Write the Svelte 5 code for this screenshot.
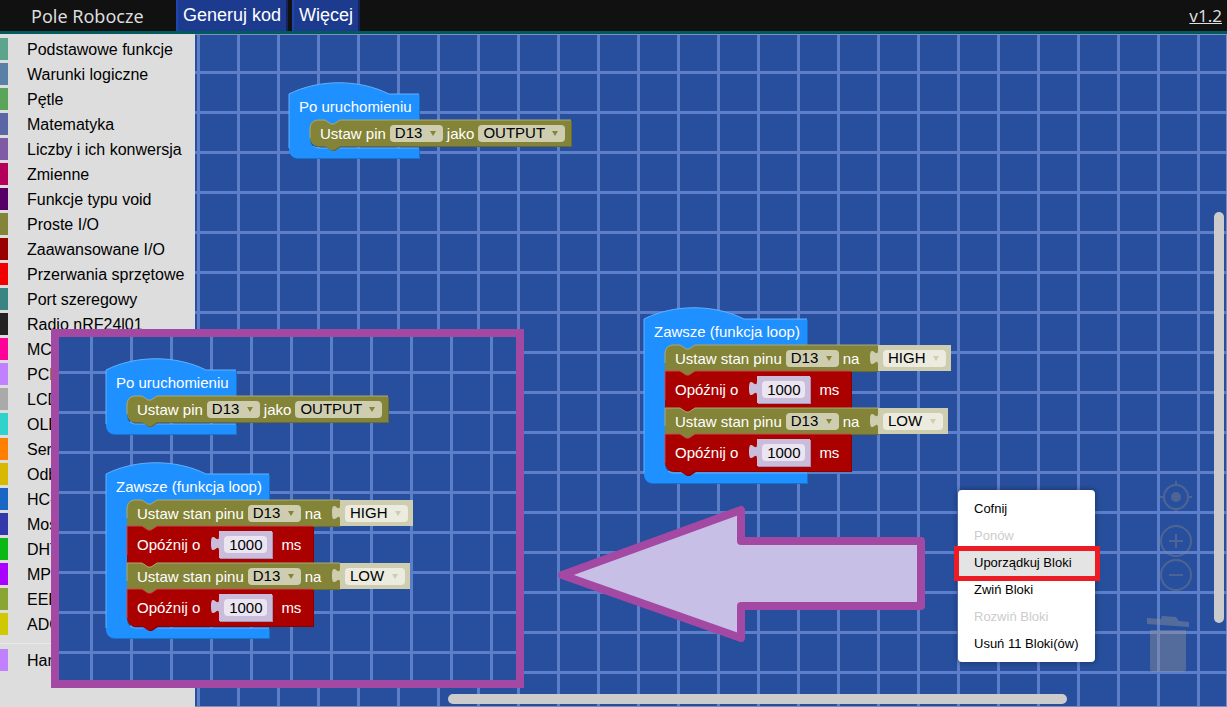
<script lang="ts">
  type Statement = {
    kind: 'mode' | 'write' | 'delay';
    value: string;
    valueWidth: number;
  };

  type Stack = {
    title: string;
    width: number;
    statements: Statement[];
  };

  const categories = [
    { name: 'Podstawowe funkcje', color: '#5ba58c' },
    { name: 'Warunki logiczne', color: '#5b80a5' },
    { name: 'Pętle', color: '#5ba55b' },
    { name: 'Matematyka', color: '#5b67a5' },
    { name: 'Liczby i ich konwersja', color: '#805ba5' },
    { name: 'Zmienne', color: '#b5005b' },
    { name: 'Funkcje typu void', color: '#550066' },
    { name: 'Proste I/O', color: '#848439' },
    { name: 'Zaawansowane I/O', color: '#990000' },
    { name: 'Przerwania sprzętowe', color: '#f00000' },
    { name: 'Port szeregowy', color: '#3b8484' },
    { name: 'Radio nRF24l01', color: '#222222' },
    { name: 'MCP', color: '#ff0099' },
    { name: 'PCF', color: '#c080ff' },
    { name: 'LCD', color: '#aaaaaa' },
    { name: 'OLED', color: '#30d2cc' },
    { name: 'Serwo', color: '#ff8000' },
    { name: 'Odbiornik', color: '#d6b900' },
    { name: 'HC-SR04', color: '#1a66c4' },
    { name: 'Most H', color: '#3338aa' },
    { name: 'DHT', color: '#0cb814' },
    { name: 'MPU', color: '#aa00ff' },
    { name: 'EEPROM', color: '#8aa632' },
    { name: 'ADC', color: '#d0c800' }
  ];

  const setup: Stack = {
    title: 'Po uruchomieniu',
    width: 130,
    statements: [{ kind: 'mode', value: 'OUTPUT', valueWidth: 87 }]
  };

  const loop: Stack = {
    title: 'Zawsze (funkcja loop)',
    width: 163,
    statements: [
      { kind: 'write', value: 'HIGH', valueWidth: 63 },
      { kind: 'delay', value: '1000', valueWidth: 43 },
      { kind: 'write', value: 'LOW', valueWidth: 60 },
      { kind: 'delay', value: '1000', valueWidth: 43 }
    ]
  };

  const workspaceStacks = [
    { stack: setup, x: 94, y: 59 },
    { stack: loop, x: 449, y: 284 }
  ];

  const previewStacks = [
    { stack: setup, x: 47, y: 33 },
    { stack: loop, x: 47, y: 137 }
  ];

  const menuItems = [
    { label: 'Cofnij', enabled: true },
    { label: 'Ponów', enabled: false },
    { label: 'Uporządkuj Bloki', enabled: true },
    { label: 'Zwiń Bloki', enabled: true },
    { label: 'Rozwiń Bloki', enabled: false },
    { label: 'Usuń 11 Bloki(ów)', enabled: true }
  ];

  const sizes = {
    mode: { width: 261, height: 26 },
    write: { width: 213, height: 26 },
    delay: { width: 186, height: 37 }
  };

  let highlighted = 2;

  function mouthHeight(stack: Stack) {
    return stack.statements.reduce((sum, s) => sum + sizes[s.kind].height, 2);
  }

  // C-shaped block with a rounded hat on top
  function hatPath(width: number, mouth: number) {
    return `M0,0 c30,-15 70,-15 100,0 H${width} v26 H51 l-6,4 h-3 l-6,-4 h-7 a8,8 0 0 0 -8,8 v${mouth - 16} a8,8 0 0 0 8,8 H${width} v10 H8 a8,8 0 0 1 -8,-8 z`;
  }

  function statementPath(width: number, height: number, first: boolean, last: boolean) {
    const start = first ? 'M0,8 a8,8 0 0 1 8,-8' : 'M0,0';
    const end = last ? 'H8 a8,8 0 0 1 -8,-8' : 'H0';
    return `${start} H15 l6,4 h3 l6,-4 H${width} v${height} H30 l-6,4 h-3 l-6,-4 ${end} z`;
  }

  function statementEdge(width: number, height: number, first: boolean) {
    const start = first ? `M0,${height - 8} V8 a8,8 0 0 1 8,-8` : `M0,${height - 8} V0`;
    return `${start} H15 l6,4 h3 l6,-4 H${width}`;
  }
</script>

{#snippet dropdown(value: string, width: number, label: string)}
  <span class="dropdown" style="width: {width}px">
    <select aria-label={label}>
      <option>{value}</option>
    </select>
  </span>
{/snippet}

{#snippet plug()}
  <svg class="plug" width="9" height="20" viewBox="0 0 9 20" aria-hidden="true">
    <path d="M9,5 H8 c0,10 -8,-8 -8,7.5 s8,-2.5 8,7.5 h1 z" transform="translate(0,-2)" />
  </svg>
{/snippet}

{#snippet blockStack(stack: Stack, x: number, y: number)}
  <div class="stack" style="left: {x}px; top: {y}px">
    <svg class="shape" width="1" height="1" aria-hidden="true">
      <path class="hat-dark" d={hatPath(stack.width, mouthHeight(stack))} transform="translate(1,1)" />
      <path class="hat-fill" d={hatPath(stack.width, mouthHeight(stack))} />
      <path
        class="hat-light"
        d="M0,{mouthHeight(stack) + 26} V0 c30,-15 70,-15 100,0 H{stack.width} M24,{mouthHeight(stack) + 24} a8,8 0 0 0 5,2 H{stack.width}"
      />
    </svg>
    <div class="stack-title">{stack.title}</div>
    <div class="mouth">
      {#each stack.statements as s, i}
        {@const size = sizes[s.kind]}
        {@const last = i === stack.statements.length - 1}
        <div class="statement {s.kind}">
          <svg class="shape" width="1" height="1" aria-hidden="true">
            <path class="dark" d={statementPath(size.width, size.height, i === 0, last)} transform="translate(1,1)" />
            <path class="fill" d={statementPath(size.width, size.height, i === 0, last)} />
            <path class="light" d={statementEdge(size.width, size.height, i === 0)} />
          </svg>
          {#if s.kind === 'mode'}
            <div class="fields" style="width: {size.width}px">
              <span>Ustaw pin</span>
              {@render dropdown('D13', 53, 'Pin')}
              <span>jako</span>
              {@render dropdown(s.value, s.valueWidth, 'Tryb pinu')}
            </div>
          {:else if s.kind === 'write'}
            <div class="fields" style="width: {size.width}px">
              <span>Ustaw stan pinu</span>
              {@render dropdown('D13', 53, 'Pin')}
              <span>na</span>
            </div>
            <div class="value state">
              {@render plug()}
              {@render dropdown(s.value, s.valueWidth, 'Stan')}
            </div>
          {:else}
            <div class="fields" style="width: {size.width}px">
              <span>Opóźnij o</span>
              <div class="value number">
                {@render plug()}
                <input type="text" value={s.value} aria-label="Czas w ms" style="width: {s.valueWidth}px" />
              </div>
              <span>ms</span>
            </div>
          {/if}
        </div>
      {/each}
    </div>
  </div>
{/snippet}

<div class="app">
  <header>
    <h1>Pole Robocze</h1>
    <nav>
      <button type="button">Generuj kod</button>
      <button type="button">Więcej</button>
    </nav>
    <a class="version" href="#version">v1.2</a>
  </header>

  <main>
    <aside>
      <ul>
        {#each categories as category}
          <li>
            <button type="button" style="border-left-color: {category.color}">{category.name}</button>
          </li>
        {/each}
        <li class="separator"></li>
        <li>
          <button type="button" style="border-left-color: #c080ff">Hardware</button>
        </li>
      </ul>
    </aside>

    <section class="workspace grid">
      {#each workspaceStacks as item}
        {@render blockStack(item.stack, item.x, item.y)}
      {/each}

      <div class="tools">
        <button type="button" aria-label="Wyśrodkuj">
          <svg width="32" height="32" viewBox="0 0 32 32">
            <circle cx="16" cy="16" r="12" />
            <circle class="solid" cx="16" cy="16" r="4" />
            <path d="M16,0 V4 M16,28 V32 M0,16 H4 M28,16 H32" />
          </svg>
        </button>
        <button type="button" class="zoom-in" aria-label="Powiększ">
          <svg width="32" height="32" viewBox="0 0 32 32">
            <circle cx="16" cy="16" r="15" />
            <path d="M9,16 H23 M16,9 V23" />
          </svg>
        </button>
        <button type="button" aria-label="Pomniejsz">
          <svg width="32" height="32" viewBox="0 0 32 32">
            <circle cx="16" cy="16" r="15" />
            <path d="M9,16 H23" />
          </svg>
        </button>
        <svg class="trash" width="45" height="58" viewBox="0 0 45 58" aria-hidden="true">
          <path d="M0,3 L14,4 L15,1 L29,2 L32,6 L42,7 L42,12 L0,9 z" />
          <path d="M3,15 H39 V53 a4,4 0 0 1 -4,4 H7 a4,4 0 0 1 -4,-4 z" />
        </svg>
      </div>

      <div class="scroll vertical"></div>
      <div class="scroll horizontal"></div>

      <ul class="context-menu">
        {#each menuItems as item, i}
          <li>
            <button
              type="button"
              disabled={!item.enabled}
              class:active={i === highlighted}
              on:mouseenter={() => (highlighted = i)}
            >
              {item.label}
            </button>
          </li>
        {/each}
      </ul>
      <div class="marker"></div>

      <svg class="arrow" width="367" height="137" viewBox="0 0 367 137" aria-hidden="true">
        <path d="M4,69 L183,4 V35 H363 V100 H183 V132 z" />
      </svg>
    </section>
  </main>

  <div class="preview grid">
    {#each previewStacks as item}
      {@render blockStack(item.stack, item.x, item.y)}
    {/each}
  </div>
</div>

<style>
  :global(body) {
    margin: 0;
    background: #ddd;
  }

  .app {
    position: relative;
    display: flex;
    flex-direction: column;
    min-height: 100vh;
    overflow: hidden;
    font-family: 'Liberation Sans', Arial, sans-serif;
    color: #000;
  }

  button,
  select,
  input {
    font: inherit;
    color: inherit;
  }

  ul {
    list-style: none;
    margin: 0;
    padding: 0;
  }

  header {
    display: flex;
    align-items: stretch;
    height: 31px;
    background: #111;
    border-bottom: 3px solid #015b5e;
    color: #ddd;
  }

  h1 {
    box-sizing: border-box;
    width: 176px;
    margin: 0;
    padding-left: 31px;
    font: 400 18px/32px 'Noto Sans', sans-serif;
  }

  nav {
    display: flex;
    gap: 4px;
  }

  nav button {
    padding: 0 5px;
    border: 0;
    border-left: 2px solid #1f45b0;
    border-right: 2px solid #15235a;
    background: #1c3a8e;
    color: #fff;
    font-size: 18px;
    line-height: 28px;
    padding-bottom: 2px;
    cursor: pointer;
  }

  .version {
    margin-left: auto;
    padding-right: 5px;
    color: #ddd;
    font: 17px/32px 'Noto Sans', sans-serif;
  }

  main {
    flex: 1;
    display: flex;
  }

  aside {
    width: 195px;
    padding-top: 4px;
    box-sizing: border-box;
    background: #ddd;
  }

  aside li {
    margin-bottom: 3px;
  }

  aside button {
    box-sizing: border-box;
    display: block;
    width: 100%;
    height: 22px;
    padding: 2px 0 0 19px;
    border: 0;
    border-left: 8px solid;
    background: none;
    font-size: 16px;
    line-height: 20px;
    text-align: left;
    white-space: nowrap;
    cursor: pointer;
  }

  aside .separator {
    margin: 8px 0 5px;
    border-bottom: 1px solid #e8e8e8;
  }

  .grid {
    background-color: #274f9d;
    background-image:
      linear-gradient(90deg, #5d7ec8 3px, transparent 3px),
      linear-gradient(#5d7ec8 3px, transparent 3px);
    background-size: 40px 40px;
  }

  .workspace {
    position: relative;
    flex: 1;
    border: 1px solid #7d8fbd;
    border-left: 0;
    background-position: 2px 36px;
  }

  .preview {
    position: absolute;
    left: 51px;
    top: 329px;
    width: 457px;
    height: 343px;
    border: 8px solid #a349a4;
    background-position: 31px 34px;
  }

  .stack {
    position: absolute;
    color: #fff;
    font-size: 15px;
    white-space: nowrap;
  }

  .shape {
    position: absolute;
    left: 0;
    top: 0;
    overflow: visible;
  }

  .hat-dark {
    fill: #1873cc;
  }

  .hat-fill {
    fill: #1e90ff;
  }

  .hat-light {
    fill: none;
    stroke: #62b1ff;
  }

  .stack-title {
    position: relative;
    padding-left: 10px;
    line-height: 26px;
  }

  .mouth {
    padding-left: 21px;
  }

  .statement {
    position: relative;
    display: flex;
    height: 26px;
    --fill: #848439;
    --dark: #6a6a2e;
    --light: #a9a974;
    --pill: #cecdb0;
  }

  .statement.delay {
    height: 37px;
    --fill: #aa0000;
    --dark: #880000;
    --light: #c44d4d;
  }

  .statement .dark {
    fill: var(--dark);
  }

  .statement .fill {
    fill: var(--fill);
  }

  .statement .light {
    fill: none;
    stroke: var(--light);
  }

  .fields {
    position: relative;
    box-sizing: border-box;
    display: flex;
    align-items: center;
    gap: 4px;
    padding-left: 10px;
  }

  .dropdown {
    position: relative;
    display: block;
    height: 17px;
    border-radius: 4px;
    background: var(--pill);
    color: #000;
  }

  .dropdown::after {
    content: '';
    position: absolute;
    right: 7px;
    top: 6px;
    border: 3px solid transparent;
    border-top: 5px solid var(--fill);
    border-bottom: 0;
    pointer-events: none;
  }

  select {
    display: block;
    width: 100%;
    height: 16px;
    padding: 0 0 0 5px;
    border: 0;
    appearance: none;
    background: none;
    line-height: 16px;
  }

  .value {
    position: relative;
    display: flex;
    align-items: center;
    padding: 0 5px;
  }

  .value.state {
    background: #cecdb0;
    --pill: #ebebdf;
    --fill: #cecdb0;
    color: #cecdb0;
  }

  .value.number {
    height: 27px;
    margin: 0 5px 0 15px;
    background: #cabddb;
    color: #cabddb;
    box-shadow: 1px 1px 0 #a293b8;
  }

  .plug {
    position: absolute;
    left: -8px;
    top: 2px;
    fill: currentColor;
  }

  input {
    box-sizing: border-box;
    height: 17px;
    padding: 0;
    border: 0;
    border-radius: 4px;
    background: #eae5f1;
    color: #000;
    text-align: center;
  }

  .tools {
    position: absolute;
    right: 34px;
    bottom: 33px;
    display: flex;
    flex-direction: column;
    align-items: flex-end;
    opacity: 0.4;
  }

  .tools button {
    height: 32px;
    padding: 0;
    border: 0;
    background: none;
    cursor: pointer;
  }

  .tools .zoom-in {
    margin: 12px 0 2px;
  }

  .tools svg {
    display: block;
    fill: none;
    stroke: #888;
    stroke-width: 2;
  }

  .tools .solid {
    fill: #888;
  }

  .tools .trash {
    margin-top: 24px;
    fill: #999;
    stroke: none;
  }

  .scroll {
    position: absolute;
    border-radius: 5px;
    background: #ccc;
  }

  .vertical {
    right: 2px;
    top: 177px;
    width: 10px;
    height: 411px;
  }

  .horizontal {
    left: 253px;
    bottom: 2px;
    width: 619px;
    height: 10px;
  }

  .context-menu {
    position: absolute;
    left: 763px;
    top: 455px;
    width: 137px;
    padding: 5px 0;
    border-radius: 4px;
    background: #fff;
    box-shadow: 0 0 5px 1px rgba(0, 0, 0, 0.3);
  }

  .context-menu button {
    display: block;
    width: 100%;
    height: 27px;
    padding: 0 0 0 16px;
    border: 0;
    background: none;
    font-size: 13px;
    text-align: left;
    white-space: nowrap;
  }

  .context-menu button:disabled {
    color: #ccc;
  }

  .context-menu .active {
    background: #e4e4e4;
  }

  .marker {
    position: absolute;
    left: 759px;
    top: 511px;
    width: 136px;
    height: 25px;
    border: 5px solid #ed1c24;
    pointer-events: none;
  }

  .arrow {
    position: absolute;
    left: 363px;
    top: 471px;
    fill: #c8bfe7;
    stroke: #a349a4;
    stroke-width: 8;
    stroke-linejoin: round;
    pointer-events: none;
  }
</style>
